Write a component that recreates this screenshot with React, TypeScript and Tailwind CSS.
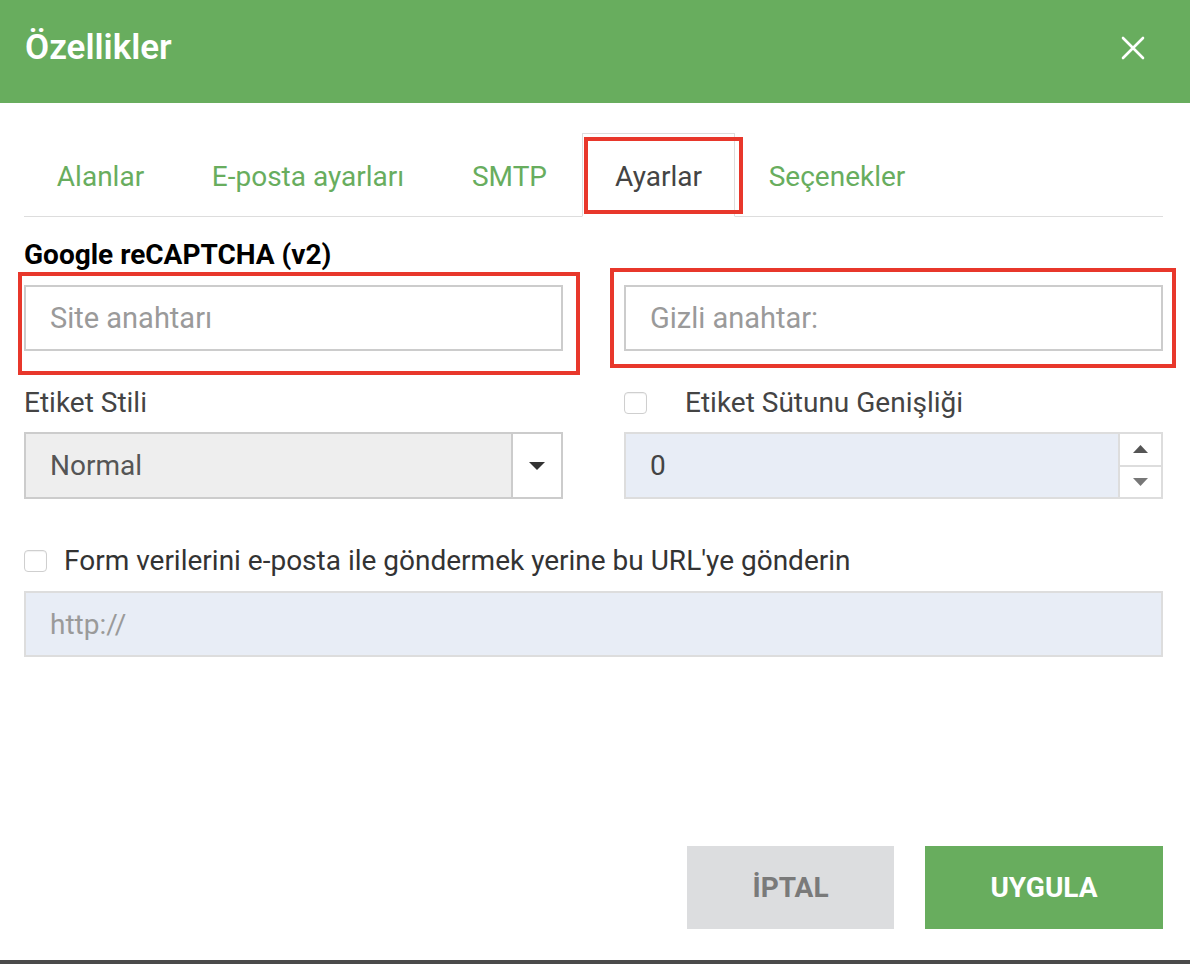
import React from "react";

const tabs = [
  { label: "Alanlar", w: "w-[153px]" },
  { label: "E-posta ayarları", w: "w-[258px]" },
  { label: "SMTP", w: "w-[141px]" },
  { label: "Ayarlar", w: "w-[153px]", active: true },
  { label: "Seçenekler", w: "w-[200px]" },
];

const Checkbox = () => (
  <span className="inline-block flex-none w-[23px] h-[22px] rounded-[4px] border border-[#cfcfcf] bg-white shadow-[inset_0_1px_1px_rgba(0,0,0,0.06)]" />
);

export default function App() {
  return (
    <div className="w-[1190px] h-[964px] bg-white flex flex-col font-['Roboto',sans-serif]">
      {/* header */}
      <div className="h-[103px] flex-none bg-[#68ad5e] flex items-center justify-between pl-[25px] pr-[44px]">
        <h1 className="text-white text-[35px] font-semibold leading-none -mt-[8px]">Özellikler</h1>
        <svg width="26" height="26" viewBox="0 0 26 26" className="-mt-[8px]">
          <path d="M3 3 L23 23 M23 3 L3 23" stroke="white" strokeWidth="2.6" strokeLinecap="round" />
        </svg>
      </div>

      <div className="flex-1 flex flex-col pl-[24px] pr-[27px]">
        {/* tabs */}
        <div className="mt-[30px] h-[84px] flex items-stretch border-b border-[#dddddd]">
          {tabs.map((t) => (
            <div
              key={t.label}
              className={`${t.w} mr-[2px] relative flex items-center justify-center pt-[4px] text-[28px] ${
                t.active
                  ? "text-[#444] bg-white border border-[#dddddd] border-b-white -mb-px"
                  : "text-[#68ad5e] border border-transparent"
              }`}
            >
              <span>{t.label}</span>
              {t.active && (
                <span className="absolute left-[1px] top-[3px] right-[-9px] bottom-[2px] border-[4px] border-[#e8372b]" />
              )}
            </div>
          ))}
        </div>

        <div className="mt-[25px] text-[28px] leading-[26px] font-bold text-black">Google reCAPTCHA (v2)</div>

        <div className="mt-[17px] grid grid-cols-2 gap-[61px]">
          <div className="relative">
            <input
              readOnly
              placeholder="Site anahtarı"
              className="w-full h-[66px] border-2 border-[#cccccc] bg-white px-[24px] text-[29px] text-[#444] placeholder:text-[#9a9a9a] outline-none"
            />
            <span className="absolute left-[-6px] top-[-13px] right-[-17px] bottom-[-24px] border-[4px] border-[#e8372b]" />
          </div>
          <div className="relative">
            <input
              readOnly
              placeholder="Gizli anahtar:"
              className="w-full h-[66px] border-2 border-[#cccccc] bg-white px-[24px] text-[29px] text-[#444] placeholder:text-[#9a9a9a] outline-none"
            />
            <span className="absolute left-[-14px] top-[-17px] right-[-13px] bottom-[-17px] border-[4px] border-[#e8372b]" />
          </div>
        </div>

        <div className="mt-[38px] grid grid-cols-2 gap-[61px]">
          <div className="flex flex-col">
            <div className="h-[28px] flex items-center text-[28px] text-[#444]">Etiket Stili</div>
            <div className="mt-[15px] h-[67px] flex border-2 border-[#cccccc] bg-[#eeeeee]">
              <div className="flex-1 flex items-center pl-[24px] text-[28px] text-[#555]">Normal</div>
              <div className="w-[50px] bg-white border-l-2 border-[#cccccc] flex items-center justify-center">
                <svg width="16" height="8" viewBox="0 0 16 8">
                  <path d="M0 0 H16 L8 8 Z" fill="#333" />
                </svg>
              </div>
            </div>
          </div>
          <div className="flex flex-col">
            <div className="h-[28px] flex items-center text-[28px] text-[#444]">
              <Checkbox />
              <span className="ml-[38px]">Etiket Sütunu Genişliği</span>
            </div>
            <div className="mt-[15px] h-[67px] flex border-2 border-[#dddddd] bg-[#e8edf6]">
              <div className="flex-1 flex items-center pl-[24px] text-[28px] text-[#444]">0</div>
              <div className="w-[43px] bg-white border-l-2 border-[#dddddd] flex flex-col">
                <div className="flex-1 flex items-center justify-center border-b-2 border-[#dddddd]">
                  <svg width="15" height="8" viewBox="0 0 15 8">
                    <path d="M0 8 H15 L7.5 0 Z" fill="#555" />
                  </svg>
                </div>
                <div className="flex-1 flex items-center justify-center">
                  <svg width="15" height="8" viewBox="0 0 15 8">
                    <path d="M0 0 H15 L7.5 8 Z" fill="#777" />
                  </svg>
                </div>
              </div>
            </div>
          </div>
        </div>

        <div className="mt-[48px] h-[28px] flex items-center text-[28px] text-[#333]">
          <Checkbox />
          <span className="ml-[17px]">Form verilerini e-posta ile göndermek yerine bu URL'ye gönderin</span>
        </div>

        <input
          readOnly
          placeholder="http://"
          className="mt-[16px] w-full h-[66px] border-2 border-[#dddddd] bg-[#e8edf6] px-[24px] text-[28px] text-[#444] placeholder:text-[#9a9a9a] outline-none"
        />

        <div className="flex-1" />

        <div className="flex justify-end gap-[31px] mb-[31px]">
          <button className="w-[207px] h-[83px] bg-[#dcdddf] text-[#7a7a7a] text-[28px] font-bold">İPTAL</button>
          <button className="w-[238px] h-[83px] bg-[#68ad5e] text-white text-[28px] font-bold">UYGULA</button>
        </div>
      </div>

      <div className="h-[4px] flex-none bg-[#4a4a4a]" />
    </div>
  );
}
